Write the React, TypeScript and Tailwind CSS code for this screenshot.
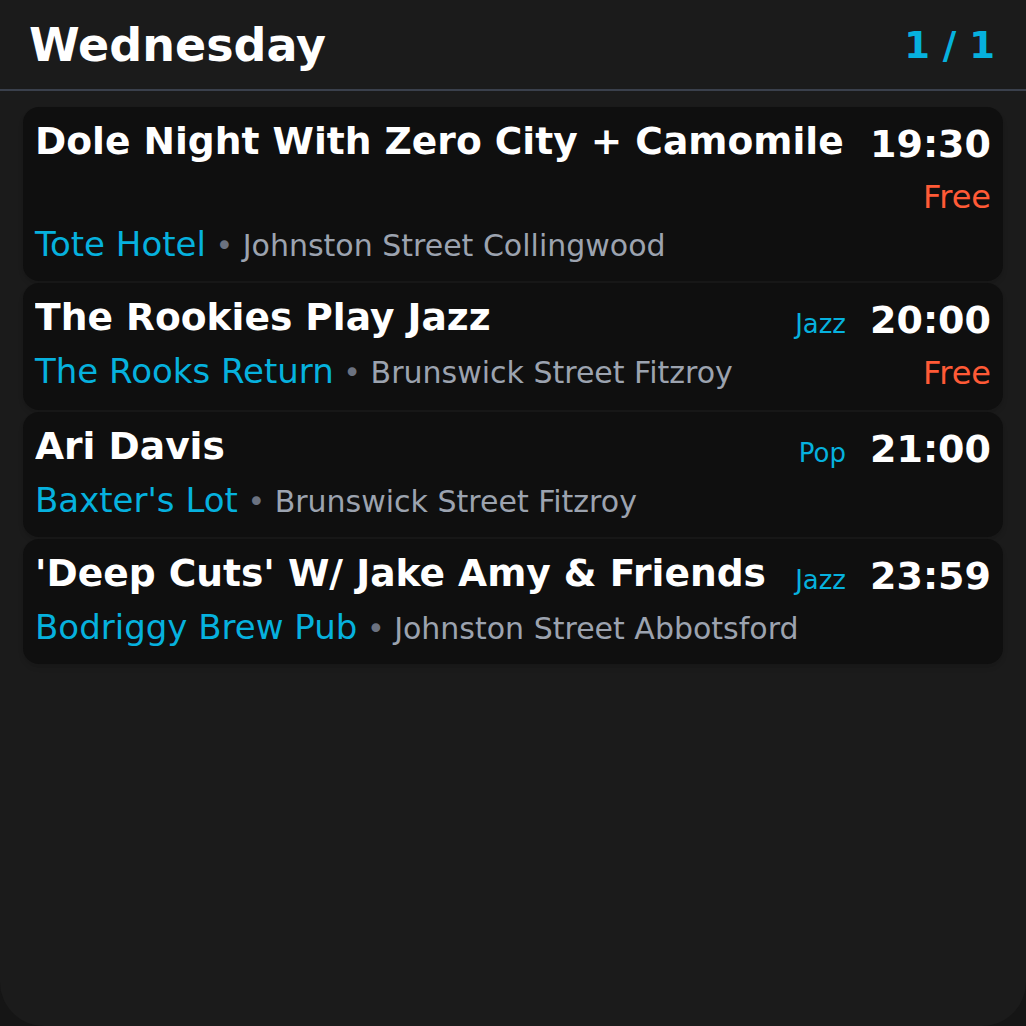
import React from 'react';

type Gig = {
  title: string;
  genre?: string;
  time: string;
  price?: string;
  venue: string;
  address: string;
  stacked?: boolean;
};

const gigs: Gig[] = [
  {
    title: 'Dole Night With Zero City + Camomile',
    time: '19:30',
    price: 'Free',
    venue: 'Tote Hotel',
    address: 'Johnston Street Collingwood',
    stacked: true,
  },
  {
    title: 'The Rookies Play Jazz',
    genre: 'Jazz',
    time: '20:00',
    price: 'Free',
    venue: 'The Rooks Return',
    address: 'Brunswick Street Fitzroy',
  },
  {
    title: 'Ari Davis',
    genre: 'Pop',
    time: '21:00',
    venue: "Baxter's Lot",
    address: 'Brunswick Street Fitzroy',
  },
  {
    title: "'Deep Cuts' W/ Jake Amy & Friends",
    genre: 'Jazz',
    time: '23:59',
    venue: 'Bodriggy Brew Pub',
    address: 'Johnston Street Abbotsford',
  },
];

function Venue({ gig, className }: { gig: Gig; className: string }) {
  return (
    <div className={`whitespace-nowrap text-[34px] leading-[40px] text-[#06b1de] ${className}`}>
      <span>{gig.venue}</span>
      <span className="text-[30px] leading-[34px] text-[#6b7280]"> • </span>
      <span className="text-[30px] leading-[34px] text-[#9ca3af]">{gig.address}</span>
    </div>
  );
}

function TimeBlock({ gig }: { gig: Gig }) {
  return (
    <div className="flex shrink-0 flex-col items-end">
      <div className="flex items-baseline gap-6">
        {gig.genre && <span className="text-[26px] text-[#06b1de]">{gig.genre}</span>}
        <span className="text-[38px] font-bold leading-[50px] text-white">{gig.time}</span>
      </div>
      {gig.price && <div className="mt-2 text-[32px] leading-[40px] text-[#ff5a36]">{gig.price}</div>}
    </div>
  );
}

function GigCard({ gig }: { gig: Gig }) {
  const title = (
    <div className="min-w-0 overflow-hidden whitespace-nowrap text-[37.6px] font-bold leading-[44px] text-white">
      {gig.title}
    </div>
  );

  if (gig.stacked) {
    return (
      <div className="rounded-2xl bg-[#0f0f0f] px-3 pt-3 pb-[17px] shadow-md">
        <div className="flex items-start justify-between gap-6">
          {title}
          <TimeBlock gig={gig} />
        </div>
        <Venue gig={gig} className="mt-[7px]" />
      </div>
    );
  }

  return (
    <div className="flex items-start justify-between gap-6 rounded-2xl bg-[#0f0f0f] px-3 pt-3 pb-[17px] shadow-md">
      <div className="min-w-0 flex-1">
        {title}
        <Venue gig={gig} className="mt-3" />
      </div>
      <TimeBlock gig={gig} />
    </div>
  );
}

export default function App() {
  return (
    <div className="h-[1026px] w-full bg-[#151515] font-['DejaVu_Sans',sans-serif]">
      <div className="h-full rounded-b-[44px] bg-[#1b1b1b]">
        <header className="flex items-center justify-between border-b-2 border-[#3a404c] pt-[18px] pb-[16px] pl-[29px] pr-[31px]">
          <h1 className="text-[46px] font-bold leading-[55px] text-white">Wednesday</h1>
          <span className="text-[37px] font-bold leading-[44px] text-[#06b1de]">1 / 1</span>
        </header>

        <div className="mt-4 flex flex-col gap-[2px] px-[23px]">
          {gigs.map((gig) => (
            <GigCard key={gig.time} gig={gig} />
          ))}
        </div>
      </div>
    </div>
  );
}
